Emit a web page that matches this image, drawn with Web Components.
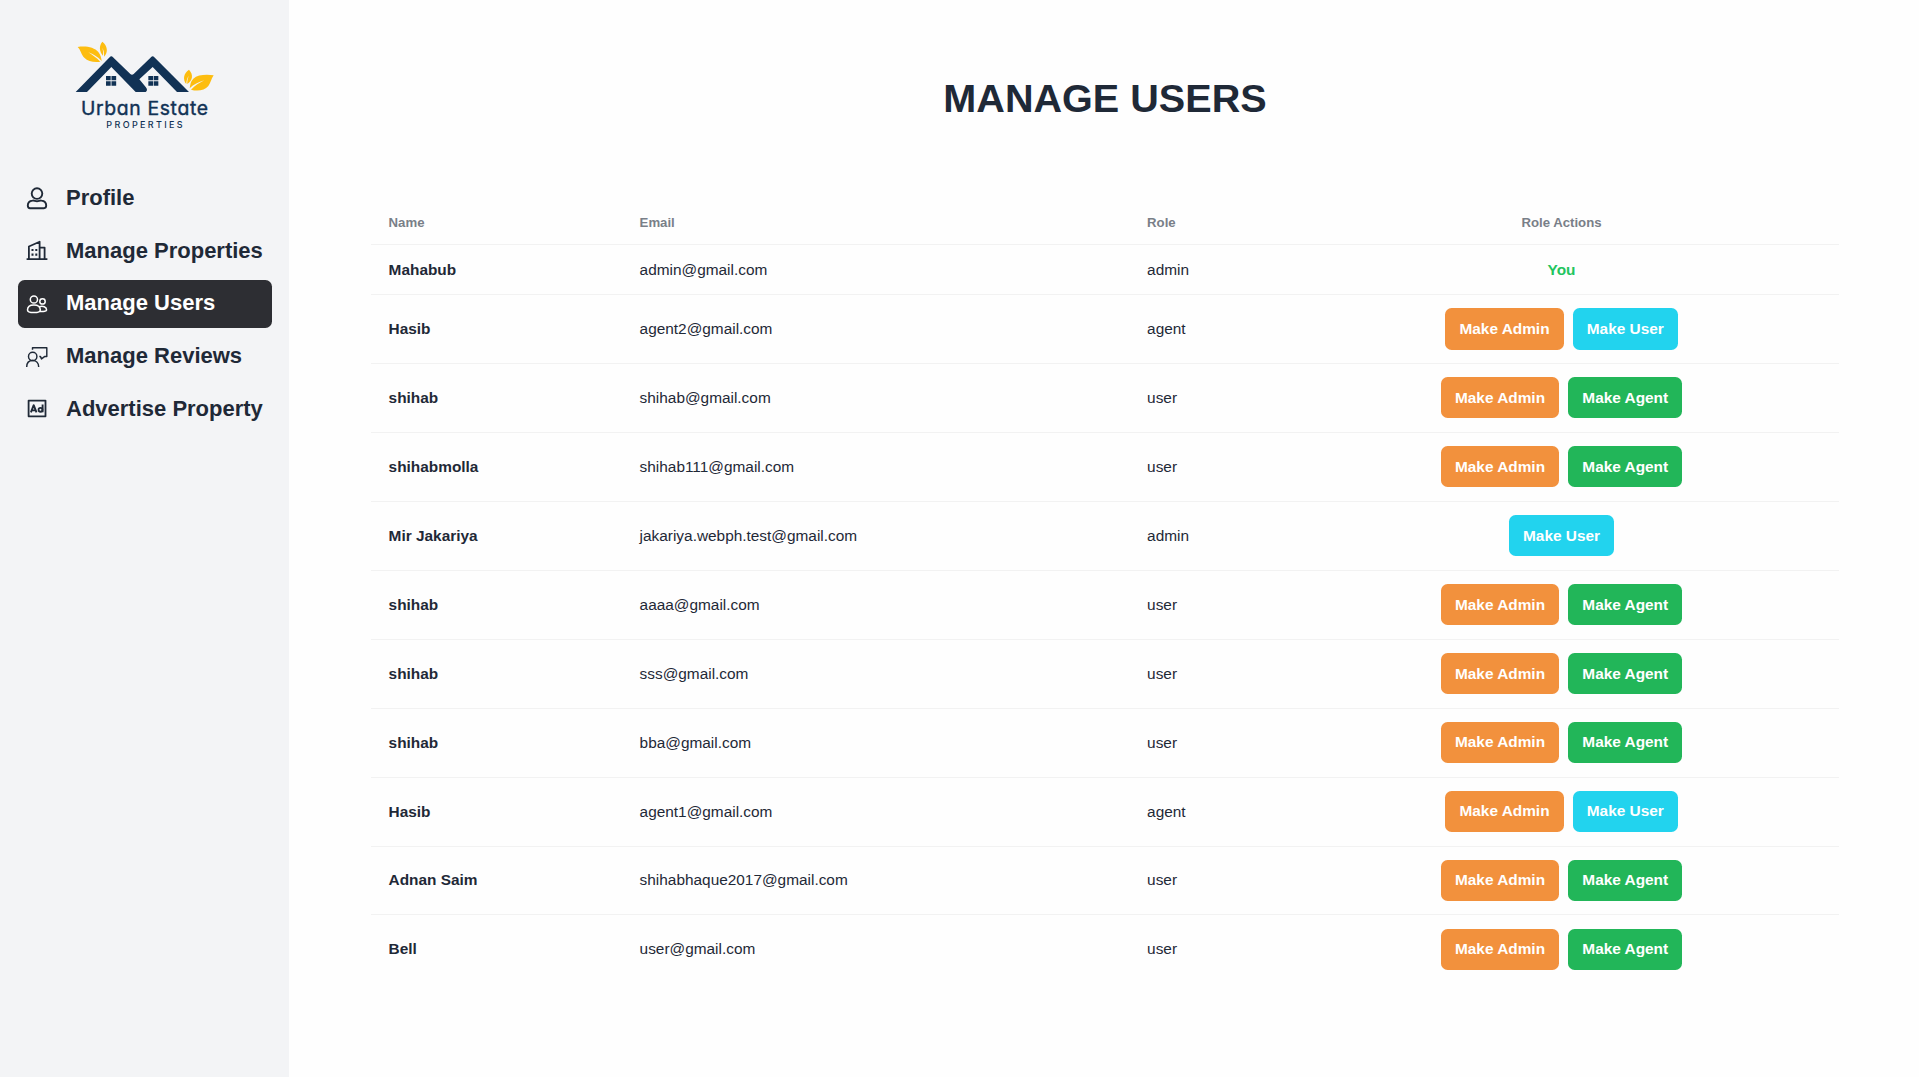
<!DOCTYPE html>
<html lang="en">
<head>
<meta charset="utf-8">
<title>Manage Users</title>
<style>
html,body{margin:0;height:100%}
body{font-family:"Liberation Sans",Arial,sans-serif;color:#1f2937;background:#fefefe;overflow:hidden}
</style>
</head>
<body>
<dashboard-page></dashboard-page>
<script>
const define = (name, html) => customElements.define(name, class extends HTMLElement {
  connectedCallback() {
    if (this.shadowRoot) return;
    const root = this.attachShadow({ mode: 'open' });
    root.innerHTML = typeof html === 'function' ? html(this) : html;
  }
});

const icons = {
  profile: `<g stroke-width="1.9" transform="translate(0 -1.800)"><circle cx="11" cy="6.4" r="5.3"/><path d="M6.500 13.400C8.300 13 9 14 11 14s2.700-1 4.500-.6c3 .3 4.700 2.400 4.700 5 0 1.900-.8 2.600-2.200 2.600H4c-1.400 0-2.200-.7-2.200-2.600 0-2.600 1.700-4.700 4.700-5z"/></g>`,
  properties: `<g transform="translate(0 -1.200)"><g stroke-width="1.800"><path d="M.6 19.400h20.800M2.900 19V6.700L13.600 1.900V19M13.600 7.800h5V19"/></g><path stroke="none" fill="currentColor" d="M5.500 9.100h2v2.200h-2zM9.300 9.100h2v2.200h-2zM5.500 13.600h2V16h-2zM9.300 13.600h2V16h-2z"/></g>`,
  users: `<g stroke-width="1.500"><circle cx="7.900" cy="5.500" r="3.600"/><circle cx="16.500" cy="7.400" r="2.700"/><path d="M1.500 16c0-3.300 2.800-5 6.400-5s6.400 1.700 6.400 5c0 1.800-2.900 2.600-6.400 2.600S1.500 17.800 1.500 16zM13.300 12.800c3.600-1.300 7.300.2 7.300 3.200 0 1.100-2.800 1.800-6.700 1.500"/></g>`,
  reviews: `<g stroke-width="1.450" transform="translate(0 -.6)"><path d="M6.500 3.300V1.300h14.300v8.900h-2.300l-3 2.300-1-2.300h-1.200"/><circle cx="6.700" cy="10" r="4.200"/><path d="M.7 20.700c0-4.200 2.500-6.500 6-6.500s6 2.300 6 6.500"/></g>`,
  ads: `<g transform="translate(0 -1.400)"><rect x="2.600" y="3" width="16.900" height="15.700" stroke-width="1.800"/><path stroke-width="1.900" d="M4.900 14.700 7.600 7.700h.2l2.700 7M5.700 12.800h4M16.600 6.800v7.900"/><circle cx="14.500" cy="12.200" r="1.950" stroke-width="1.800"/></g>`
};

define('brand-logo', `
<style>:host{display:block;width:170px;height:110px}svg{display:block}</style>
<svg width="170" height="110" viewBox="0 0 510 330" role="img" aria-label="Urban Estate Properties">
  <g fill="#113255">
    <path d="M47 186 149 82Q154 76 159 82L211 132Q216 137 221 132L273 82Q278 76 283 82L387 186H351L278 111 238 148 257 171Q265 180 257 186H227L154 111 81 186Z"/>
    <path d="M138 138h14v13h-14zM154.500 138h14v13h-14zM138 154h14v13h-14zM154.500 154h14v13h-14zM265 138h14v13h-14zM281 138h14v13h-14zM265 154h14v13h-14zM281 154h14v13h-14z"/>
  </g>
  <g fill="#fdbd10">
    <path d="M53 51C78 47 103 52 115 66 122 75 124 84 125 93 113 81 100 72 85 67 97 75 109 83 121 95 102 98 84 94 73 83 63 73 63 61 53 51Z"/>
    <path d="M127 35C117 47 117 63 129 77 130 68 129 60 127 53 131 60 133 69 132 80 146 66 142 46 127 35Z"/>
    <path d="M387 119C370 130 368 149 379 162 379 152 382 143 386 137 384 145 381 153 382 162 398 151 401 134 387 119Z"/>
    <path d="M461 136C439 133 413 134 400 146 391 155 391 166 389 175 401 163 415 157 433 151 418 159 405 166 393 179 413 185 434 181 445 168 453 158 453 147 461 136Z"/>
  </g>
  <g fill="#113255" font-family="Inter,sans-serif">
    <text x="63" y="254" font-size="58" font-weight="400" stroke="#113255" stroke-width="1.200" textLength="381" lengthAdjust="spacing" style="font-feature-settings:'cv11'">Urban Estate</text>
    <text x="139" y="293" font-size="27" font-weight="500" textLength="229" lengthAdjust="spacing">PROPERTIES</text>
  </g>
</svg>`);

define('nav-item', el => `
<style>
:host{display:flex;align-items:center;height:48px;margin:0 17px 4.700px 18px;padding-left:8px;gap:18px;border-radius:6.600px;box-sizing:border-box;font-size:22px;font-weight:700;white-space:nowrap}
:host([active]){background:#2d2e33;color:#fff}
svg{flex:none;width:22px;height:22px;fill:none;stroke:currentColor;stroke-linejoin:round;margin-top:2px;overflow:visible}
span{margin-top:-1.200px}
</style>
<svg viewBox="0 0 22 22">${icons[el.getAttribute('icon')]}</svg><span><slot></slot></span>`);

define('side-bar', `
<style>
:host{display:flex;flex-direction:column;width:289px;flex:none;background:#f3f4f6}
brand-logo{margin:30px 0 34.700px 60px}
</style>
<brand-logo></brand-logo>
<nav>
<nav-item icon="profile">Profile</nav-item>
<nav-item icon="properties">Manage Properties</nav-item>
<nav-item icon="users" active>Manage Users</nav-item>
<nav-item icon="reviews">Manage Reviews</nav-item>
<nav-item icon="ads">Advertise Property</nav-item>
</nav>`);

define('role-button', el => `
<style>
:host{display:block}
button{display:block;font:700 15.400px/22px "Liberation Sans",Arial,sans-serif;color:#fff;border:0;border-radius:6.600px;padding:9.550px 0;margin:0;text-align:center;
 width:${{Admin:118.5,Agent:114,User:105}[el.getAttribute('role-name')]}px;
 background:${{Admin:'#f2913d',Agent:'#22b659',User:'#22d3ee'}[el.getAttribute('role-name')]}}
</style><button>Make ${el.getAttribute('role-name')}</button>`);

define('user-row', el => {
  const acts = (el.getAttribute('actions') || '').split(' ').filter(Boolean);
  return `
<style>
:host{display:grid;grid-template-columns:251px 507.500px 154.500px 555px;align-items:center;height:68.907px;box-sizing:border-box;border-bottom:1px solid #f2f2f2;font-size:15.400px;line-height:22px}
:host([self]){height:50.250px}
:host(:last-of-type){border-bottom-color:transparent}
div{padding-left:17.600px}
.name{font-weight:700}
.act{padding:0;display:flex;justify-content:center;gap:9px;font-weight:700;color:#22c55e}
:host(:not([self])) .act{align-self:start;padding-top:13.220px}
</style>
<div class="name"><slot></slot></div><div>${el.getAttribute('email')}</div><div>${el.getAttribute('role-name')}</div>
<div class="act">${acts.length ? acts.map(a => `<role-button role-name="${a}"></role-button>`).join('') : '<span>You</span>'}</div>`;
});

const users = [
  ['Mahabub','admin@gmail.com','admin',''],
  ['Hasib','agent2@gmail.com','agent','Admin User'],
  ['shihab','shihab@gmail.com','user','Admin Agent'],
  ['shihabmolla','shihab111@gmail.com','user','Admin Agent'],
  ['Mir Jakariya','jakariya.webph.test@gmail.com','admin','User'],
  ['shihab','aaaa@gmail.com','user','Admin Agent'],
  ['shihab','sss@gmail.com','user','Admin Agent'],
  ['shihab','bba@gmail.com','user','Admin Agent'],
  ['Hasib','agent1@gmail.com','agent','Admin User'],
  ['Adnan Saim','shihabhaque2017@gmail.com','user','Admin Agent'],
  ['Bell','user@gmail.com','user','Admin Agent']
];

define('users-table', `
<style>
:host{display:block;width:1468px}
header{display:grid;grid-template-columns:251px 507.500px 154.500px 555px;align-items:center;height:45px;box-sizing:border-box;border-bottom:1px solid #f2f2f2;font-size:13.200px;font-weight:700;color:#797f88}
header span{padding-left:17.600px}
header span:last-child{padding:0;text-align:center}
</style>
<header><span>Name</span><span>Email</span><span>Role</span><span>Role Actions</span></header>
${users.map(([n,e,r,a]) => `<user-row ${a ? '' : 'self'} email="${e}" role-name="${r}" actions="${a}">${n}</user-row>`).join('')}`);

define('dashboard-page', `
<style>
:host{display:flex;height:100vh}
main{flex:1;display:flex;flex-direction:column;align-items:flex-start;min-width:0}
h1{margin:74px 0 78px;width:1632px;text-align:center;font-size:39.600px;line-height:48px;font-weight:700}
users-table{margin-left:82px}
</style>
<side-bar></side-bar>
<main><h1>MANAGE USERS</h1><users-table></users-table></main>`);
</script>
</body>
</html>
